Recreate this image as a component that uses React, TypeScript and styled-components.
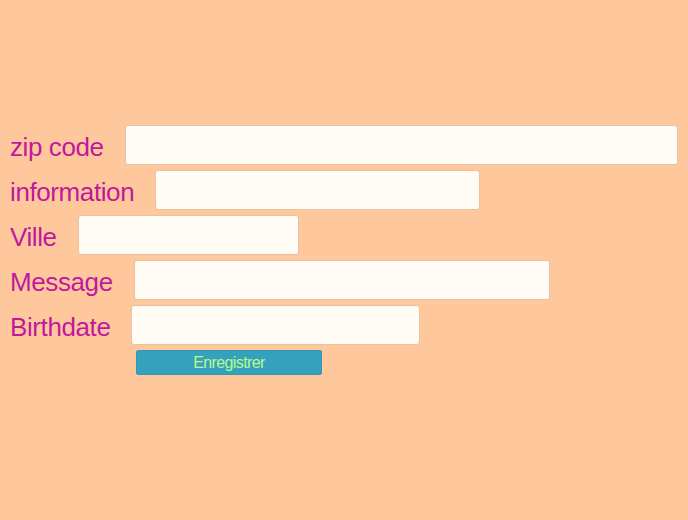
import React from "react";
import styled, { createGlobalStyle } from "styled-components";

const Global = createGlobalStyle`
  html, body { margin: 0; padding: 0; background: #ffc89c; }
  body { font-family: "Liberation Sans", Arial, sans-serif; }
`;

const Page = styled.div`
  width: 688px;
  height: 520px;
  background: #ffc89c;
  padding: 125px 0 0 10px;
  box-sizing: border-box;
`;

const Form = styled.form`
  display: flex;
  flex-direction: column;
  gap: 5px;
`;

const Row = styled.div`
  display: flex;
  align-items: center;
  gap: 21px;
  height: 40px;
`;

const Label = styled.label`
  font-size: 26px;
  letter-spacing: -0.4px;
  color: #c2189e;
  line-height: 1;
  padding-top: 4px;
`;

const Field = styled.input<{ $w: number }>`
  width: ${(p) => p.$w}px;
  height: 40px;
  box-sizing: border-box;
  background: #fffbf5;
  border: 1px solid #e8c2a0;
  border-radius: 3px;
  outline: none;
`;

const Submit = styled.button`
  margin-left: 126px;
  width: 186px;
  height: 25px;
  background: #35a2bd;
  color: #b8f98e;
  border: 1px solid #3199b3;
  border-radius: 2px;
  font-family: "Liberation Sans", Arial, sans-serif;
  font-size: 16px;
  letter-spacing: -0.6px;
  padding: 0;
`;

const fields = [
  { label: "zip code", w: 553 },
  { label: "information", w: 325 },
  { label: "Ville", w: 221 },
  { label: "Message", w: 416 },
  { label: "Birthdate", w: 289 },
];

export default function App() {
  return (
    <Page>
      <Global />
      <Form onSubmit={(e) => e.preventDefault()}>
        {fields.map((f) => (
          <Row key={f.label}>
            <Label>{f.label}</Label>
            <Field $w={f.w} />
          </Row>
        ))}
        <Submit type="submit">Enregistrer</Submit>
      </Form>
    </Page>
  );
}
